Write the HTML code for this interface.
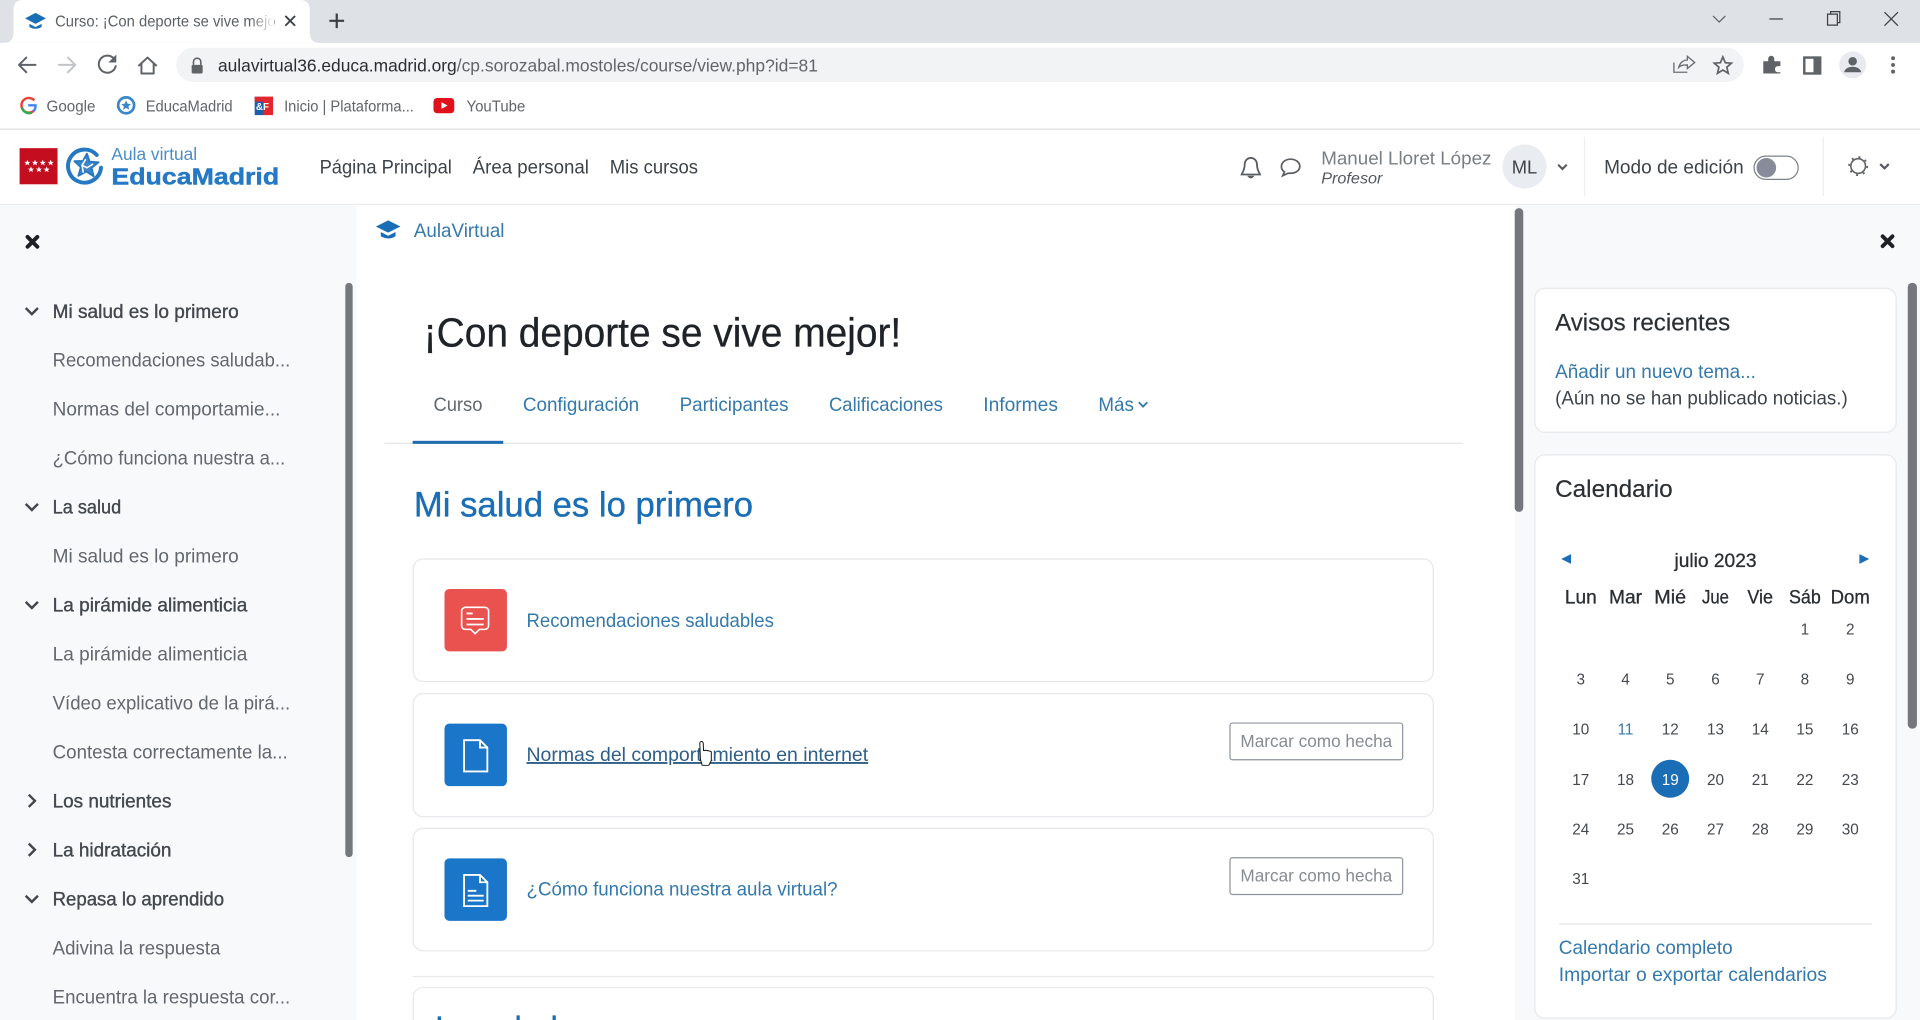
<!DOCTYPE html>
<html lang="es"><head><meta charset="utf-8"><title>Curso: ¡Con deporte se vive mejor!</title>
<style>
html,body{margin:0;padding:0;width:1920px;height:1020px;overflow:hidden;background:#fff}
svg{display:block}
text{font-family:"Liberation Sans",sans-serif;white-space:pre}
.n{font-size:16px;fill:#3d4349}
.s{font-size:15.5px;fill:#62686e}
.h{font-size:15.5px;fill:#42484e;stroke:#42484e;stroke-width:.3px}
.t{font-size:15.5px;fill:#3479ab}
.d{font-size:12.5px;fill:#45494e;text-anchor:middle}
.w{font-size:15.5px;fill:#2b2f33;text-anchor:middle;stroke:#2b2f33;stroke-width:.25px}
.b{font-size:12.5px;fill:#62666b}
.i{fill:none;stroke:#5f6368;stroke-width:1.6;stroke-linecap:round;stroke-linejoin:round}
</style></head><body>
<svg xmlns="http://www.w3.org/2000/svg" width="1920" height="1020" viewBox="0 0 1568 833">
<defs><linearGradient id="fade"><stop offset="0" stop-color="#fff" stop-opacity="0"/><stop offset="1" stop-color="#fff"/></linearGradient>
<path id="st" d="M0-2.600.7-.8 2.500-.8 1.100.3 1.600 2.100 0 1 -1.600 2.100-1.100.3-2.500-.8-.7-.8Z" fill="#fff"/></defs>
<rect width="1568" height="833" fill="#fff"/>
<!-- browser tab strip -->
<rect width="1568" height="35" fill="#dee1e6"/>
<path d="M3 35q8 0 8-8V8q0-8 8-8H245q8 0 8 8V27q0 8 8 8Z" fill="#fff"/>
<path d="M29 10.500l8.500 4.500-8.500 4.500-8.500-4.500Z M24 19.500v2.500q5 3 10 0v-2.500l-5 2.500Z" fill="#1a6eb5"/>
<text x="45" y="21.500" font-size="12.500" fill="#5c6166" textLength="180" lengthAdjust="spacingAndGlyphs">Curso: ¡Con deporte se vive mejo</text>
<rect x="204" y="8" width="20" height="20" fill="url(#fade)"/>
<path d="M233 13l8 8M241 13l-8 8" stroke="#3c4043" stroke-width="1.500" fill="none"/>
<path d="M275 11v12M269 17h12" stroke="#3c4043" stroke-width="1.800" fill="none"/>
<path d="M1399 13l5 5 5-5" fill="none" stroke="#5f6368"/>
<path d="M1445 15.500h11" stroke="#3c4043"/>
<path d="M1492.500 11.500h8v9h-8zM1495 11.500v-2h7.500v9h-2" fill="none" stroke="#3c4043"/>
<path d="M1539 10l11 11M1550 10l-11 11" stroke="#3c4043" fill="none"/>
<!-- toolbar -->
<path d="M29 53H16M21.500 47l-6 6 6 6" class="i"/>
<path d="M48 53H61M55.500 47l6 6-6 6" class="i" style="stroke:#c3c6c9"/>
<path d="M93.500 48.500a7 7 0 1 0 1 5.500" class="i"/><path d="M95 44.500v6.500h-6.500Z" fill="#5f6368"/>
<path d="M113.500 53.500l7-6.500 7 6.500M115.500 52v8h10V52" class="i"/>
<rect x="144" y="39" width="1280" height="28" rx="14" fill="#f1f3f4"/>
<path d="M158 53v-2.500a3 3 0 0 1 6 0V53" fill="none" stroke="#5f6368" stroke-width="1.300"/><rect x="156.500" y="53" width="9" height="7" rx="1" fill="#5f6368"/>
<text x="178" y="58.500" font-size="14.200" fill="#2b2e31" textLength="195" lengthAdjust="spacingAndGlyphs">aulavirtual36.educa.madrid.org</text>
<text x="373" y="58.500" font-size="14.200" fill="#62666b" textLength="295" lengthAdjust="spacingAndGlyphs">/cp.sorozabal.mostoles/course/view.php?id=81</text>
<path d="M1367 51v8h11M1371 55c1-4 4-6 7-6v-3l6 5-6 5v-3c-3 0-5 0-7 2Z" fill="none" stroke="#6b6f74" stroke-width="1.100"/>
<path d="M1407 46.500l2 4.700 5 .4-3.800 3.300 1.200 5-4.400-2.700-4.400 2.700 1.200-5-3.800-3.300 5-.4Z" fill="none" stroke="#5f6368" stroke-width="1.400"/>
<path d="M1440 50h4v-2a2.500 2.500 0 0 1 5 0v2h5v4h-2a2.500 2.500 0 0 0 0 5h2v1h-14z" fill="#5f6368"/>
<rect x="1473.500" y="47" width="13" height="13" fill="#fff" stroke="#5f6368" stroke-width="2"/><rect x="1481" y="47" width="5" height="13" fill="#5f6368"/>
<circle cx="1513" cy="53" r="11" fill="#e8eaf0"/><circle cx="1513" cy="50" r="3.500" fill="#5f6368"/><path d="M1506 59c1-6 13-6 14 0Z" fill="#5f6368"/>
<circle cx="1546" cy="47.500" r="1.600" fill="#5f6368"/><circle cx="1546" cy="53" r="1.600" fill="#5f6368"/><circle cx="1546" cy="58.500" r="1.600" fill="#5f6368"/>
<!-- bookmarks -->
<path d="M28 82a6 6 0 1 0 0 8" fill="none" stroke="#e94335" stroke-width="2"/><path d="M23 86h6a6 6 0 0 1-2 5" fill="none" stroke="#4285f4" stroke-width="2"/><path d="M18 88a6 6 0 0 0 8 4" fill="none" stroke="#34a853" stroke-width="2"/>
<text class="b" x="38" y="91" textLength="40" lengthAdjust="spacingAndGlyphs">Google</text>
<circle cx="103" cy="86" r="6.500" fill="none" stroke="#3b86c8" stroke-width="2.200"/><path d="M103 82l1.200 2.700 2.800.2-2.100 1.900.6 2.800-2.500-1.500-2.500 1.500.6-2.800-2.100-1.900 2.800-.2Z" fill="#3b86c8"/>
<text class="b" x="119" y="91" textLength="71" lengthAdjust="spacingAndGlyphs">EducaMadrid</text>
<rect x="208" y="79" width="8" height="15" fill="#1c5fa8"/><rect x="215" y="79" width="8" height="15" fill="#e3262e"/><rect x="208" y="79" width="15" height="4" fill="#e3262e"/>
<text x="209" y="90" font-size="8" font-weight="bold" fill="#fff">&amp;F</text>
<text class="b" x="232" y="91" textLength="106" lengthAdjust="spacingAndGlyphs">Inicio | Plataforma...</text>
<rect x="354" y="80" width="17" height="12.500" rx="3" fill="#e0111b"/><path d="M360.500 83.500l5 2.700-5 2.700Z" fill="#fff"/>
<text class="b" x="381" y="91" textLength="48" lengthAdjust="spacingAndGlyphs">YouTube</text>
<rect y="105" width="1568" height="1" fill="#dcdee0"/>
<!-- site header -->
<rect y="166.500" width="1568" height="1" fill="#e9ebed"/>
<rect x="16" y="121" width="31" height="29.500" fill="#c40d1e"/>
<use href="#st" x="22.300" y="133"/><use href="#st" x="28.600" y="133"/><use href="#st" x="34.900" y="133"/><use href="#st" x="41.400" y="133"/><use href="#st" x="25.300" y="138.500"/><use href="#st" x="31.800" y="138.500"/><use href="#st" x="38.100" y="138.500"/>
<path d="M79 126.500A13.500 13.500 0 1 0 82.500 137" fill="none" stroke="#2579c4" stroke-width="3.200" stroke-linecap="round"/>
<path d="M71 125.500l2.200 6.500 7.300.5-5.700 4.500 1.700 7-6-4-6.500 3.600 2-7-5.300-5 7-.2Z" fill="#3a86c9" stroke="#2579c4" stroke-width="1.500" stroke-linejoin="round"/>
<path d="M70 130l-3 5 4 2 5-3M67 135l1 6" fill="none" stroke="#fff" stroke-width="1.300"/>
<text x="91" y="130.700" font-size="14" fill="#4a8cc5" textLength="70" lengthAdjust="spacingAndGlyphs">Aula virtual</text>
<text x="91" y="150.500" font-size="18.500" font-weight="bold" fill="#2579c4" stroke="#2579c4" stroke-width=".35" textLength="137" lengthAdjust="spacingAndGlyphs">EducaMadrid</text>
<text class="n" x="261" y="141.500" textLength="108" lengthAdjust="spacingAndGlyphs">Página Principal</text>
<text class="n" x="386" y="141.500" textLength="95" lengthAdjust="spacingAndGlyphs">Área personal</text>
<text class="n" x="498" y="141.500" textLength="72" lengthAdjust="spacingAndGlyphs">Mis cursos</text>
<path d="M1021.500 129a5 5 0 0 0-5 5c0 5-2 7-2.500 8.500h15c-.5-1.500-2.500-3.500-2.500-8.500a5 5 0 0 0-5-5Z" fill="none" stroke="#5b5f63" stroke-width="1.500"/><path d="M1019.500 144q2 2.500 4 0Z" fill="#5b5f63" stroke="#5b5f63"/>
<path d="M1054 130c-4.500 0-7.500 2.800-7.500 6 0 2 1 3.500 2.500 4.500l-1.500 3 4.500-2h2c4.500 0 7.500-2.700 7.500-5.500 0-3.300-3-6-7.500-6Z" fill="none" stroke="#5b5f63" stroke-width="1.400"/>
<text x="1079" y="134.500" font-size="15" fill="#787e84" textLength="139" lengthAdjust="spacingAndGlyphs">Manuel Lloret López</text>
<text x="1079" y="150" font-size="12.500" font-style="italic" fill="#54595e" textLength="50" lengthAdjust="spacingAndGlyphs">Profesor</text>
<circle cx="1245" cy="136" r="18" fill="#e9ecf0"/>
<text x="1245" y="141.500" font-size="15" fill="#3d4349" text-anchor="middle">ML</text>
<path d="M1272.500 134.500l3.500 3.500 3.500-3.500" fill="none" stroke="#55595e" stroke-width="1.700"/>
<rect x="1293.500" y="112" width="1" height="48" fill="#eceef0"/>
<text class="n" x="1310" y="141.500" textLength="114" lengthAdjust="spacingAndGlyphs">Modo de edición</text>
<rect x="1432.500" y="127.500" width="36" height="19" rx="9.500" fill="#fff" stroke="#7c8288"/>
<circle cx="1442.500" cy="137" r="8" fill="#868c99"/>
<rect x="1488.500" y="112" width="1" height="48" fill="#eceef0"/>
<circle cx="1517.500" cy="135.600" r="6" fill="none" stroke="#5e6266" stroke-width="1.300"/>
<circle cx="1517.500" cy="135.600" r="7.400" fill="none" stroke="#5e6266" stroke-width="1.400" stroke-dasharray="1.700 4.100"/>
<path d="M1535.500 134l3.500 3.500 3.500-3.500" fill="none" stroke="#55595e" stroke-width="1.800"/>
<!-- left drawer -->
<rect y="167.500" width="291" height="666" fill="#f8f9fb"/>
<path d="M22.500 193.500l8 8M30.500 193.500l-8 8" stroke="#1d2125" stroke-width="3.200" stroke-linecap="round"/>
<rect x="282" y="231" width="6" height="469" rx="3" fill="#74787c"/>
<g fill="none" stroke="#42484e" stroke-width="2">
<path d="M21 251.500l5 5 5-5M21 411.500l5 5 5-5M21 491.500l5 5 5-5M21 731.500l5 5 5-5M23.500 649l5 5-5 5M23.500 689l5 5-5 5"/>
</g>
<text class="h" x="43" y="259.500" textLength="152" lengthAdjust="spacingAndGlyphs">Mi salud es lo primero</text>
<text class="s" x="43" y="299.500" textLength="194" lengthAdjust="spacingAndGlyphs">Recomendaciones saludab...</text>
<text class="s" x="43" y="339.500" textLength="186" lengthAdjust="spacingAndGlyphs">Normas del comportamie...</text>
<text class="s" x="43" y="379.500" textLength="190" lengthAdjust="spacingAndGlyphs">¿Cómo funciona nuestra a...</text>
<text class="h" x="43" y="419.500" textLength="56" lengthAdjust="spacingAndGlyphs">La salud</text>
<text class="s" x="43" y="459.500" textLength="152" lengthAdjust="spacingAndGlyphs">Mi salud es lo primero</text>
<text class="h" x="43" y="499.500" textLength="159" lengthAdjust="spacingAndGlyphs">La pirámide alimenticia</text>
<text class="s" x="43" y="539.500" textLength="159" lengthAdjust="spacingAndGlyphs">La pirámide alimenticia</text>
<text class="s" x="43" y="579.500" textLength="194" lengthAdjust="spacingAndGlyphs">Vídeo explicativo de la pirá...</text>
<text class="s" x="43" y="619.500" textLength="192" lengthAdjust="spacingAndGlyphs">Contesta correctamente la...</text>
<text class="h" x="43" y="659.500" textLength="97" lengthAdjust="spacingAndGlyphs">Los nutrientes</text>
<text class="h" x="43" y="699.500" textLength="97" lengthAdjust="spacingAndGlyphs">La hidratación</text>
<text class="h" x="43" y="739.500" textLength="140" lengthAdjust="spacingAndGlyphs">Repasa lo aprendido</text>
<text class="s" x="43" y="779.500" textLength="137" lengthAdjust="spacingAndGlyphs">Adivina la respuesta</text>
<text class="s" x="43" y="819.500" textLength="194" lengthAdjust="spacingAndGlyphs">Encuentra la respuesta cor...</text>
<!-- main -->
<path d="M317 180l10 5-10 5-10-5Z M311 189.500v3.500q6 3.500 12 0v-3.500l-6 3Z" fill="#1a6eb5"/>
<text class="t" x="338" y="193.500" textLength="74" lengthAdjust="spacingAndGlyphs">AulaVirtual</text>
<text x="346" y="283" font-size="33" fill="#1f2327" stroke="#1f2327" stroke-width=".25" textLength="390" lengthAdjust="spacingAndGlyphs">¡Con deporte se vive mejor!</text>
<text x="354" y="335.500" font-size="15.500" fill="#62686e" textLength="40" lengthAdjust="spacingAndGlyphs">Curso</text>
<text class="t" x="427" y="335.500" textLength="95" lengthAdjust="spacingAndGlyphs">Configuración</text>
<text class="t" x="555" y="335.500" textLength="89" lengthAdjust="spacingAndGlyphs">Participantes</text>
<text class="t" x="677" y="335.500" textLength="93" lengthAdjust="spacingAndGlyphs">Calificaciones</text>
<text class="t" x="803" y="335.500" textLength="61" lengthAdjust="spacingAndGlyphs">Informes</text>
<text class="t" x="897" y="335.500" textLength="29" lengthAdjust="spacingAndGlyphs">Más</text>
<path d="M930 328.500l3.500 3.500 3.500-3.500" fill="none" stroke="#3479ab" stroke-width="1.500"/>
<rect x="314" y="361.500" width="881" height="1" fill="#e3e5e8"/>
<rect x="337" y="360" width="74" height="2.500" fill="#1f6db0"/>
<text x="338" y="422" font-size="28.500" fill="#1a6eb5" stroke="#1a6eb5" stroke-width=".3" textLength="277" lengthAdjust="spacingAndGlyphs">Mi salud es lo primero</text>
<g fill="#fff" stroke="#e6e8eb">
<rect x="337.500" y="456.500" width="833" height="100" rx="8"/>
<rect x="337.500" y="566.500" width="833" height="100.500" rx="8"/>
<rect x="337.500" y="676.500" width="833" height="100" rx="8"/>
<rect x="337.500" y="806.500" width="833" height="60" rx="8"/>
</g>
<rect x="337" y="797" width="834" height="1" fill="#e6e8eb"/>
<rect x="363" y="481" width="51" height="51" rx="4" fill="#e9524e"/>
<path d="M380 496h16a3 3 0 0 1 3 3v12a3 3 0 0 1-3 3h-4.500l-3.500 3.500-3.500-3.500H380a3 3 0 0 1-3-3v-12a3 3 0 0 1 3-3Z" fill="none" stroke="#fff" stroke-width="1.300"/>
<path d="M381 501h5M381 505.500h14M381 510h14" stroke="#fff" stroke-width="1.500"/>
<rect x="363" y="591" width="51" height="51" rx="4" fill="#1a76c8"/>
<path d="M379 604.500h13l6 6v19.500h-19ZM392 604.500v6h6" fill="none" stroke="#fff" stroke-width="1.500"/>
<rect x="363" y="701" width="51" height="51" rx="4" fill="#1a76c8"/>
<path d="M379 714.500h13l6 6v19.500h-19ZM392 714.500v6h6" fill="none" stroke="#fff" stroke-width="1.500"/>
<path d="M382 727.500h7M382 731.500h13M382 735.500h13" stroke="#fff" stroke-width="1.500"/>
<text class="t" x="430" y="512" textLength="202" lengthAdjust="spacingAndGlyphs">Recomendaciones saludables</text>
<text x="430" y="621.500" font-size="15.500" fill="#2f5f88" text-decoration="underline" textLength="279" lengthAdjust="spacingAndGlyphs">Normas del comportamiento en internet</text>
<text class="t" x="430" y="731.500" textLength="254" lengthAdjust="spacingAndGlyphs">¿Cómo funciona nuestra aula virtual?</text>
<g fill="#fff" stroke="#8f959e"><rect x="1004.500" y="590.500" width="141" height="30" rx="2"/><rect x="1004.500" y="700.500" width="141" height="30" rx="2"/></g>
<text x="1013" y="610" font-size="14" fill="#868c92" textLength="124" lengthAdjust="spacingAndGlyphs">Marcar como hecha</text>
<text x="1013" y="720" font-size="14" fill="#868c92" textLength="124" lengthAdjust="spacingAndGlyphs">Marcar como hecha</text>
<path d="M572 620l-.5-13a1.400 1.400 0 0 1 2.800 0l.3 6 1.800-.3 1.500.3 1.500.3 1.500.7v7l-2 4h-5.500Z" fill="#fff" stroke="#111" stroke-width=".8"/>
<text x="355.500" y="850" font-size="28.500" fill="#1a6eb5" stroke="#1a6eb5" stroke-width=".3" textLength="100" lengthAdjust="spacingAndGlyphs">La salud</text>
<!-- right drawer -->
<rect x="1237" y="167.500" width="331" height="666" fill="#f8f9fb"/>
<rect x="1237" y="170" width="7" height="248" rx="3.500" fill="#74787c"/>
<path d="M1537.500 193l8 8M1545.500 193l-8 8" stroke="#1d2125" stroke-width="3.200" stroke-linecap="round"/>
<rect x="1558" y="231" width="7.500" height="364" rx="3.500" fill="#74787c"/>
<g fill="#fff" stroke="#e6e8eb"><rect x="1253.500" y="235.500" width="295" height="117.500" rx="8"/><rect x="1253.500" y="371.500" width="295" height="460" rx="8"/></g>
<text x="1270" y="270" font-size="20" fill="#2b2f33" stroke="#2b2f33" stroke-width=".15" textLength="143" lengthAdjust="spacingAndGlyphs">Avisos recientes</text>
<text class="t" x="1270" y="308.500" textLength="164" lengthAdjust="spacingAndGlyphs">Añadir un nuevo tema...</text>
<text x="1270" y="330.500" font-size="15.500" fill="#3d4349" textLength="239" lengthAdjust="spacingAndGlyphs">(Aún no se han publicado noticias.)</text>
<text x="1270" y="406" font-size="20" fill="#2b2f33" stroke="#2b2f33" stroke-width=".15" textLength="96" lengthAdjust="spacingAndGlyphs">Calendario</text>
<path d="M1275 456.500l8-4v8ZM1526.500 456.500l-8-4v8Z" fill="#1a6eb5"/>
<text class="w" x="1401" y="463" textLength="67" lengthAdjust="spacingAndGlyphs">julio 2023</text>
<text class="w" x="1291" y="493" textLength="26" lengthAdjust="spacingAndGlyphs">Lun</text>
<text class="w" x="1327.500" y="493" textLength="27" lengthAdjust="spacingAndGlyphs">Mar</text>
<text class="w" x="1364" y="493" textLength="26" lengthAdjust="spacingAndGlyphs">Mié</text>
<text class="w" x="1401" y="493" textLength="22" lengthAdjust="spacingAndGlyphs">Jue</text>
<text class="w" x="1437.500" y="493" textLength="21" lengthAdjust="spacingAndGlyphs">Vie</text>
<text class="w" x="1474" y="493" textLength="26" lengthAdjust="spacingAndGlyphs">Sáb</text>
<text class="w" x="1511" y="493" textLength="32" lengthAdjust="spacingAndGlyphs">Dom</text>
<circle cx="1364" cy="636" r="15.500" fill="#1a6eb5"/>
<text class="d" x="1474" y="518">1</text><text class="d" x="1511" y="518">2</text>
<text class="d" x="1291" y="559">3</text><text class="d" x="1327.500" y="559">4</text><text class="d" x="1364" y="559">5</text><text class="d" x="1401" y="559">6</text><text class="d" x="1437.500" y="559">7</text><text class="d" x="1474" y="559">8</text><text class="d" x="1511" y="559">9</text>
<text class="d" x="1291" y="600">10</text><text class="d" x="1327.500" y="600" style="fill:#3479ab">11</text><text class="d" x="1364" y="600">12</text><text class="d" x="1401" y="600">13</text><text class="d" x="1437.500" y="600">14</text><text class="d" x="1474" y="600">15</text><text class="d" x="1511" y="600">16</text>
<text class="d" x="1291" y="641">17</text><text class="d" x="1327.500" y="641">18</text><text class="d" x="1364" y="641" style="fill:#fff">19</text><text class="d" x="1401" y="641">20</text><text class="d" x="1437.500" y="641">21</text><text class="d" x="1474" y="641">22</text><text class="d" x="1511" y="641">23</text>
<text class="d" x="1291" y="681.500">24</text><text class="d" x="1327.500" y="681.500">25</text><text class="d" x="1364" y="681.500">26</text><text class="d" x="1401" y="681.500">27</text><text class="d" x="1437.500" y="681.500">28</text><text class="d" x="1474" y="681.500">29</text><text class="d" x="1511" y="681.500">30</text>
<text class="d" x="1291" y="722">31</text>
<rect x="1273" y="754" width="256" height="1" fill="#e3e5e8"/>
<text class="t" x="1273" y="779" textLength="142" lengthAdjust="spacingAndGlyphs">Calendario completo</text>
<text class="t" x="1273" y="801" textLength="219" lengthAdjust="spacingAndGlyphs">Importar o exportar calendarios</text>
</svg>
</body></html>
